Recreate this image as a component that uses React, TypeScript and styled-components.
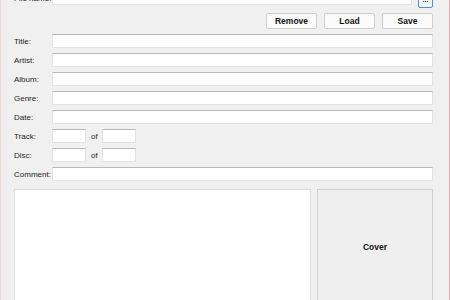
import React from 'react';
import styled, { createGlobalStyle } from 'styled-components';

const GlobalStyle = createGlobalStyle`
    html, body {
        margin: 0;
        padding: 0;
        width: 450px;
        height: 300px;
        overflow: hidden;
        background: #f0f0f0;
        font-family: "Liberation Sans", Arial, sans-serif;
    }
`;

// the window is cropped: its top row (file name) sits partly above the frame
const Window = styled.div`
    box-sizing: border-box;
    width: 450px;
    height: 314px;
    margin-top: -9px;
    padding: 0 16px 0 13px;
    border-left: 1px solid #ecd6d6;
    border-right: 1px solid #e2a6a6;
    display: flex;
    flex-direction: column;
`;

const FileRow = styled.div`
    display: flex;
    align-items: flex-start;
    height: 14px;
`;

const Label = styled.span`
    width: 38px;
    flex-shrink: 0;
    font-size: 8px;
    color: #1f1f1f;
    white-space: nowrap;
`;

const FileLabel = styled(Label)`
    line-height: 14px;
    padding-top: 1px;
`;

const Input = styled.div<{ $width?: number }>`
    box-sizing: border-box;
    height: 14px;
    background: #fff;
    border: 1px solid #e3e3e3;
    border-top-color: #b9b9b9;
    flex: ${p => (p.$width ? `0 0 ${p.$width}px` : '1 1 auto')};
`;

const BrowseButton = styled.div`
    box-sizing: border-box;
    flex: 0 0 15px;
    height: 17px;
    margin-left: 6px;
    border: 1px solid #4a90d9;
    border-radius: 2px;
    background: #f4f8fc;
    display: flex;
    align-items: center;
    justify-content: center;
    font-size: 7px;
    font-weight: bold;
    color: #222;
`;

const ActionBar = styled.div`
    display: flex;
    justify-content: flex-end;
    gap: 7px;
    margin-top: 8px;
    margin-bottom: 5px;
`;

const ActionButton = styled.div`
    box-sizing: border-box;
    width: 51px;
    height: 16px;
    background: #fbfbfb;
    border: 1px solid #cfcfcf;
    border-radius: 2px;
    font-size: 8.5px;
    font-weight: bold;
    line-height: 14px;
    text-align: center;
    color: #111;
`;

const Form = styled.div`
    display: flex;
    flex-direction: column;
    gap: 5px;
`;

const Row = styled.div`
    display: flex;
    align-items: center;
    height: 14px;
`;

const Of = styled.span`
    width: 16px;
    padding-left: 5px;
    box-sizing: border-box;
    font-size: 8px;
    color: #1f1f1f;
`;

const Bottom = styled.div`
    display: flex;
    gap: 6px;
    margin-top: 8px;
    flex: 1;
`;

const Notes = styled.div`
    box-sizing: border-box;
    flex: 0 0 297px;
    background: #fff;
    border: 1px solid #e2e2e2;
    border-top-color: #dadada;
`;

const CoverButton = styled.div`
    box-sizing: border-box;
    flex: 1;
    display: flex;
    align-items: center;
    justify-content: center;
    background: #efefef;
    border: 1px solid #d0d0d0;
    font-size: 8.5px;
    font-weight: bold;
    color: #111;
`;

const fields = ['Title:', 'Artist:', 'Album:', 'Genre:', 'Date:'];

export default function App() {
    return <>
        <GlobalStyle />
        <Window>
            <FileRow>
                <FileLabel>File name:</FileLabel>
                <Input />
                <BrowseButton>...</BrowseButton>
            </FileRow>
            <ActionBar>
                <ActionButton>Remove</ActionButton>
                <ActionButton>Load</ActionButton>
                <ActionButton>Save</ActionButton>
            </ActionBar>
            <Form>
                {fields.map(f => <Row key={f}>
                    <Label>{f}</Label>
                    <Input />
                </Row>)}
                <Row>
                    <Label>Track:</Label>
                    <Input $width={34} />
                    <Of>of</Of>
                    <Input $width={34} />
                </Row>
                <Row>
                    <Label>Disc:</Label>
                    <Input $width={34} />
                    <Of>of</Of>
                    <Input $width={34} />
                </Row>
                <Row>
                    <Label>Comment:</Label>
                    <Input />
                </Row>
            </Form>
            <Bottom>
                <Notes />
                <CoverButton>Cover</CoverButton>
            </Bottom>
        </Window>
    </>;
}
